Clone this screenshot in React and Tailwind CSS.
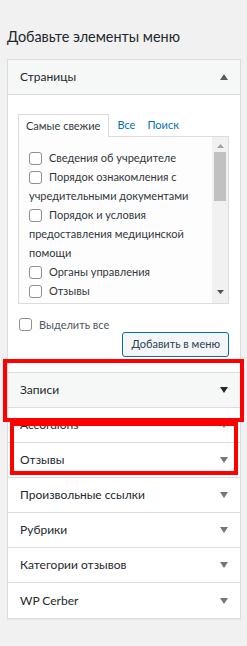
import React from "react"

const font = { fontFamily: 'Lato, "Noto Sans", sans-serif' }

const Arrow = ({ up, dark }) => (
  <svg width="8" height="6" viewBox="0 0 8 6" className="shrink-0">
    {up ? (
      <polygon points="0,6 8,6 4,0" fill={dark ? "#23282d" : "#555d66"} />
    ) : (
      <polygon points="0,0 8,0 4,6" fill={dark ? "#23282d" : "#72777c"} />
    )}
  </svg>
)

const Box = () => (
  <span className="inline-block w-[13px] h-[13px] border border-[#8c8f94] rounded-[3px] bg-white align-[-3px] mr-[7px]" />
)

const Section = ({ title, dark, gray, last }) => (
  <div
    className={
      "h-[35px] flex items-center justify-between pl-[12px] pr-[12px] text-[12px] text-[#23282d] " +
      (last ? "" : "border-b border-[#dcdcde] ") +
      (gray ? "bg-[#f6f7f7]" : "bg-white")
    }
  >
    <span>{title}</span>
    <Arrow dark={dark} />
  </div>
)

const pages = [
  "Сведения об учредителе",
  "Порядок ознакомления с учредительными документами",
  "Порядок и условия предоставления медицинской помощи",
  "Органы управления",
  "Отзывы",
  "Контакты",
]

export default function App() {
  return (
    <div className="relative w-[247px] h-[646px] bg-[#f1f1f1] overflow-hidden" style={font}>
      <h2 className="pt-[27px] pl-[7px] text-[14.4px] leading-[20px] text-[#23282d]">
        Добавьте элементы меню
      </h2>

      <div className="mt-[12px] ml-[7px] w-[234px] border border-[#dcdcde] bg-white shadow-[0_1px_1px_rgba(0,0,0,0.04)]">
        <div className="h-[35px] flex items-center justify-between pl-[12px] pr-[12px] text-[12px] text-[#23282d] bg-[#f6f7f7] border-b border-[#dcdcde]">
          <span>Страницы</span>
          <Arrow up />
        </div>

        <div className="pt-[19px] pl-[10px] pr-[11px] pb-[15px] border-b border-[#dcdcde]">
          <div className="flex items-end h-[22px] text-[11px]">
            <div className="relative z-10 h-[23px] -mb-px pl-[7px] pr-[8px] flex items-center border-t border-x border-[#dcdcde] bg-white text-[#32373c]">
              Самые свежие
            </div>
            <span className="ml-[8px] h-[22px] flex items-center text-[#0073aa]">Все</span>
            <span className="ml-[12px] h-[22px] flex items-center text-[#0073aa]">Поиск</span>
          </div>

          <div className="h-[168px] border border-[#dcdcde] bg-[#fdfdfd] flex">
            <div className="flex-1 overflow-hidden pt-[11px] pl-[10px] pr-[4px]">
              <ul className="text-[11px] leading-[19px] text-[#32373c]">
                {pages.map((p) => (
                  <li key={p}>
                    <Box />
                    {p}
                  </li>
                ))}
              </ul>
            </div>
            <div className="w-[16px] bg-[#f1f1f1] flex flex-col items-center">
              <div className="h-[15px] flex items-center justify-center pt-[2px]">
                <svg width="7" height="4" viewBox="0 0 7 4">
                  <polygon points="0,4 7,4 3.5,0" fill="#a3a3a3" />
                </svg>
              </div>
              <div className="w-[12px] h-[49px] bg-[#c1c1c1]" />
              <div className="flex-1" />
              <div className="h-[17px] flex items-start justify-center pt-[4px]">
                <svg width="7" height="4" viewBox="0 0 7 4">
                  <polygon points="0,0 7,0 3.5,4" fill="#505050" />
                </svg>
              </div>
            </div>
          </div>

          <div className="mt-[13px] flex items-center pl-[1px] text-[11px] leading-[15px] text-[#50575e]">
            <span className="inline-block w-[13px] h-[13px] border border-[#8c8f94] rounded-[3px] bg-white mr-[7px]" />
            <span>Выделить все</span>
          </div>

          <div className="flex justify-end">
            <button className="h-[25px] px-[8px] border border-[#0071a1] rounded-[3px] bg-[#f3f5f6] text-[11px] text-[#2e4453]">
              Добавить в меню
            </button>
          </div>
        </div>

        <Section title="Записи" dark gray />
        <Section title="Accordions" />
        <Section title="Отзывы" />
        <Section title="Произвольные ссылки" />
        <Section title="Рубрики" />
        <Section title="Категории отзывов" />
        <Section title="WP Cerber" last />
      </div>

      <div className="absolute left-[3px] top-[359px] w-[241px] h-[63px] border-[4px] border-[#ff0000]" />
      <div className="absolute left-[10px] top-[422px] w-[228px] h-[53px] border-[4px] border-[#ff0000]" />
    </div>
  )
}
